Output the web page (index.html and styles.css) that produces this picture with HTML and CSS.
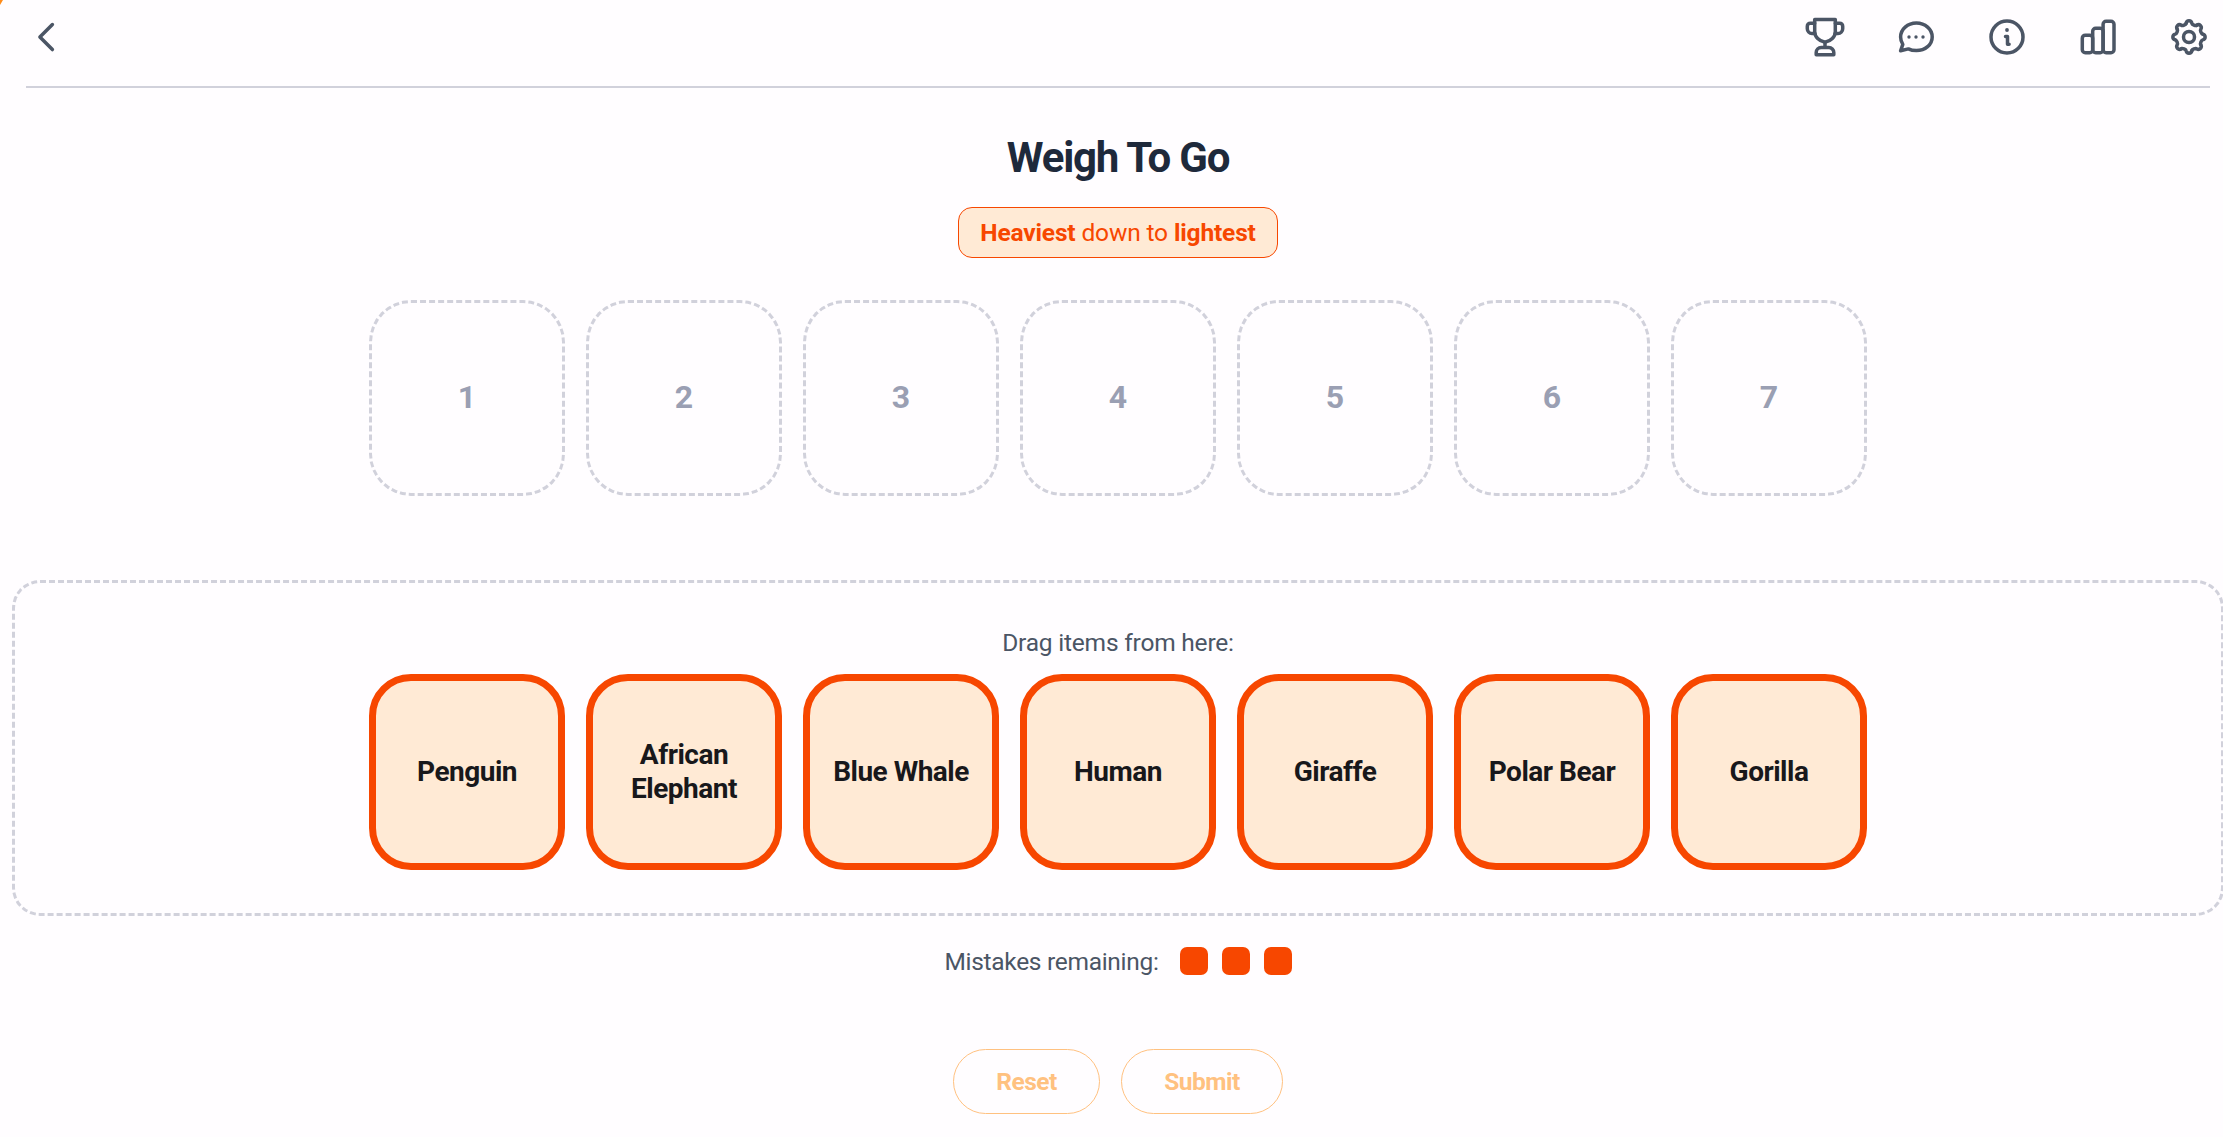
FILE: index.html
```html
<!DOCTYPE html>
<html lang="en">
  <head>
    <meta charset="UTF-8" />
    <meta name="viewport" content="width=device-width, initial-scale=1" />
    <title>Weigh To Go</title>
    <link rel="stylesheet" href="styles.css">
  </head>

  <body>
    <div class="corner"></div>

    <div class="page">
      <header class="topbar">
        <a href="#" class="icon" aria-label="Back">
          <svg viewBox="0 0 42 42"><path d="M26.4 8.6 13.9 21l12.5 12.6" /></svg>
        </a>
        <nav class="menu">
          <a href="#" class="icon" aria-label="Trophies">
            <svg viewBox="0 0 42 42">
              <path d="M10.7 3.5h20.6v12c0 5.5-4.5 9.8-10.3 10.8-5.8-1-10.3-5.3-10.3-10.8z" />
              <path d="M10.7 7.2H6.3a3 3 0 0 0-3 3v2.6a4.7 4.7 0 0 0 4.7 4.7h2.7M31.3 7.2h4.4a3 3 0 0 1 3 3v2.6a4.7 4.7 0 0 1-4.7 4.7h-2.7M21 26.3v5" />
              <path d="M17.2 31.5h7.6a5 5 0 0 1 5 5v2.2H12.2v-2.2a5 5 0 0 1 5-5z" />
            </svg>
          </a>
          <a href="#" class="icon" aria-label="Feedback">
            <svg viewBox="0 0 42 42">
              <path d="M5.6 34.8 7.8 28.4A13.400 13.400 0 0 1 5.600 21C5.600 13.200 12.600 7 21.400 7S37.200 13.200 37.200 20.900 30.200 34.600 21.400 34.600C18.400 34.600 15.600 34 13.400 32.900z" />
              <g class="dots"><circle cx="14" cy="21" r="1.7" /><circle cx="21" cy="21" r="1.7" /><circle cx="28" cy="21" r="1.7" /></g>
            </svg>
          </a>
          <a href="#" class="icon" aria-label="How to play">
            <svg viewBox="0 0 42 42">
              <circle cx="21" cy="21" r="16" />
              <path d="M19.5 20.5h2v7.800h1.600" />
              <g class="dots"><circle cx="21" cy="14" r="1.900" /></g>
            </svg>
          </a>
          <a href="#" class="icon" aria-label="Statistics">
            <svg viewBox="0 0 42 42">
              <rect x="5.300" y="19.200" width="10.400" height="17.500" rx="3" />
              <rect x="15.700" y="12.300" width="10.400" height="24.400" rx="3" />
              <rect x="26.100" y="5.300" width="10.900" height="31.400" rx="3" />
            </svg>
          </a>
          <a href="#" class="icon" aria-label="Settings">
            <svg viewBox="-21 -21 42 42">
              <circle r="5.500" />
              <!-- one tooth of the gear, repeated every 45deg -->
              <path id="tooth" d="M-2.900-13.600C-2.200-17 2.200-17 2.900-13.600 3.100-12.400 6.580-10.960 7.570-11.670" />
              <use href="#tooth" transform="rotate(45)" />
              <use href="#tooth" transform="rotate(90)" />
              <use href="#tooth" transform="rotate(135)" />
              <use href="#tooth" transform="rotate(180)" />
              <use href="#tooth" transform="rotate(225)" />
              <use href="#tooth" transform="rotate(270)" />
              <use href="#tooth" transform="rotate(315)" />
            </svg>
          </a>
        </nav>
      </header>

      <h1 class="title">Weigh To Go</h1>
      <div class="hint"><b>Heaviest</b>&nbsp;down to&nbsp;<b>lightest</b></div>

      <div class="row slots">
        <div class="slot">1</div>
        <div class="slot">2</div>
        <div class="slot">3</div>
        <div class="slot">4</div>
        <div class="slot">5</div>
        <div class="slot">6</div>
        <div class="slot">7</div>
      </div>

      <section class="pool">
        <p class="pool-label">Drag items from here:</p>
        <div class="row">
          <div class="item" draggable="true">Penguin</div>
          <div class="item" draggable="true">African Elephant</div>
          <div class="item" draggable="true">Blue Whale</div>
          <div class="item" draggable="true">Human</div>
          <div class="item" draggable="true">Giraffe</div>
          <div class="item" draggable="true">Polar Bear</div>
          <div class="item" draggable="true">Gorilla</div>
        </div>
      </section>

      <div class="mistakes">
        <span class="mistakes-label">Mistakes remaining:</span>
        <span class="life"></span>
        <span class="life"></span>
        <span class="life"></span>
      </div>

      <div class="buttons">
        <button class="btn reset" disabled>Reset</button>
        <button class="btn submit" disabled>Submit</button>
      </div>
    </div>
  </body>
</html>
```
FILE: styles.css
```css
* {
  box-sizing: border-box;
}

body {
  margin: 0;
  overflow: hidden;
  background-color: #fffdff;
  color: #4b5565;
  font-family: Roboto, "Liberation Sans", sans-serif;
  font-size: 24.5px;
}

/* sliver of the loading bar in the top left */
.corner {
  position: absolute;
  top: 0;
  left: 0;
  width: 3px;
  height: 5px;
  background-color: #ff8c1a;
  clip-path: polygon(0 0, 100% 0, 0 100%);
}

.page {
  display: flex;
  flex-direction: column;
  align-items: center;
  margin: 0 -1px 0 12px;
}

.topbar {
  display: flex;
  justify-content: space-between;
  align-self: stretch;
  height: 88px;
  margin: 0 14px;
  padding-top: 16px;
  border-bottom: 2px solid #d1d1db;
}

.menu {
  display: flex;
  gap: 49px;
}

.icon,
.icon svg {
  display: block;
  width: 42px;
  height: 42px;
}

.icon svg {
  fill: none;
  stroke: #4b5565;
  stroke-width: 3.5;
  stroke-linecap: round;
  stroke-linejoin: round;
}

.icon .dots {
  fill: #4b5565;
  stroke: none;
}

.title {
  margin: 45px 0 24px;
  color: #1e293b;
  font-size: 42px;
  line-height: 50px;
  font-weight: 700;
  letter-spacing: -1.2px;
}

.hint {
  display: flex;
  justify-content: center;
  align-items: center;
  width: 320px;
  height: 51px;
  border: 1px solid #f74700;
  border-radius: 14px;
  background-color: #ffead5;
  color: #f74700;
  letter-spacing: -0.15px;
}

.row {
  display: flex;
  justify-content: center;
  gap: 21px;
}

.slots {
  margin-top: 42px;
}

.slot,
.item {
  display: flex;
  justify-content: center;
  align-items: center;
  width: 196px;
  height: 196px;
  border-radius: 42px;
  font-weight: 700;
  text-align: center;
}

.slot {
  padding-bottom: 2px;
  border: 3px dashed #d1d1db;
  color: #9a9fb3;
  font-size: 32px;
}

.item {
  padding: 0 14px;
  border: 7px solid #f74700;
  background-color: #ffead5;
  color: #18181b;
  font-size: 28px;
  line-height: 34px;
  letter-spacing: -0.5px;
  cursor: grab;
}

.pool {
  align-self: stretch;
  height: 336px;
  margin-top: 84px;
  padding-top: 42px;
  border: 3px dashed #d1d1db;
  border-radius: 28px;
}

.pool-label {
  margin: 0 0 14px;
  line-height: 35px;
  text-align: center;
  letter-spacing: -0.2px;
}

.mistakes {
  display: flex;
  align-items: center;
  gap: 14px;
  height: 28px;
  margin-top: 31px;
}

.mistakes-label {
  margin-right: 7px;
  letter-spacing: -0.3px;
}

.life {
  width: 28px;
  height: 28px;
  border-radius: 7px;
  background-color: #f74700;
}

.buttons {
  display: flex;
  gap: 21px;
  margin-top: 74px;
}

.btn {
  height: 65px;
  padding: 0;
  border: 1px solid #ffc180;
  border-radius: 33px;
  background: none;
  color: #ffc180;
  font-family: inherit;
  font-size: 24.5px;
  font-weight: 700;
  letter-spacing: -0.5px;
}

.reset {
  width: 147px;
}

.submit {
  width: 162px;
}
```
